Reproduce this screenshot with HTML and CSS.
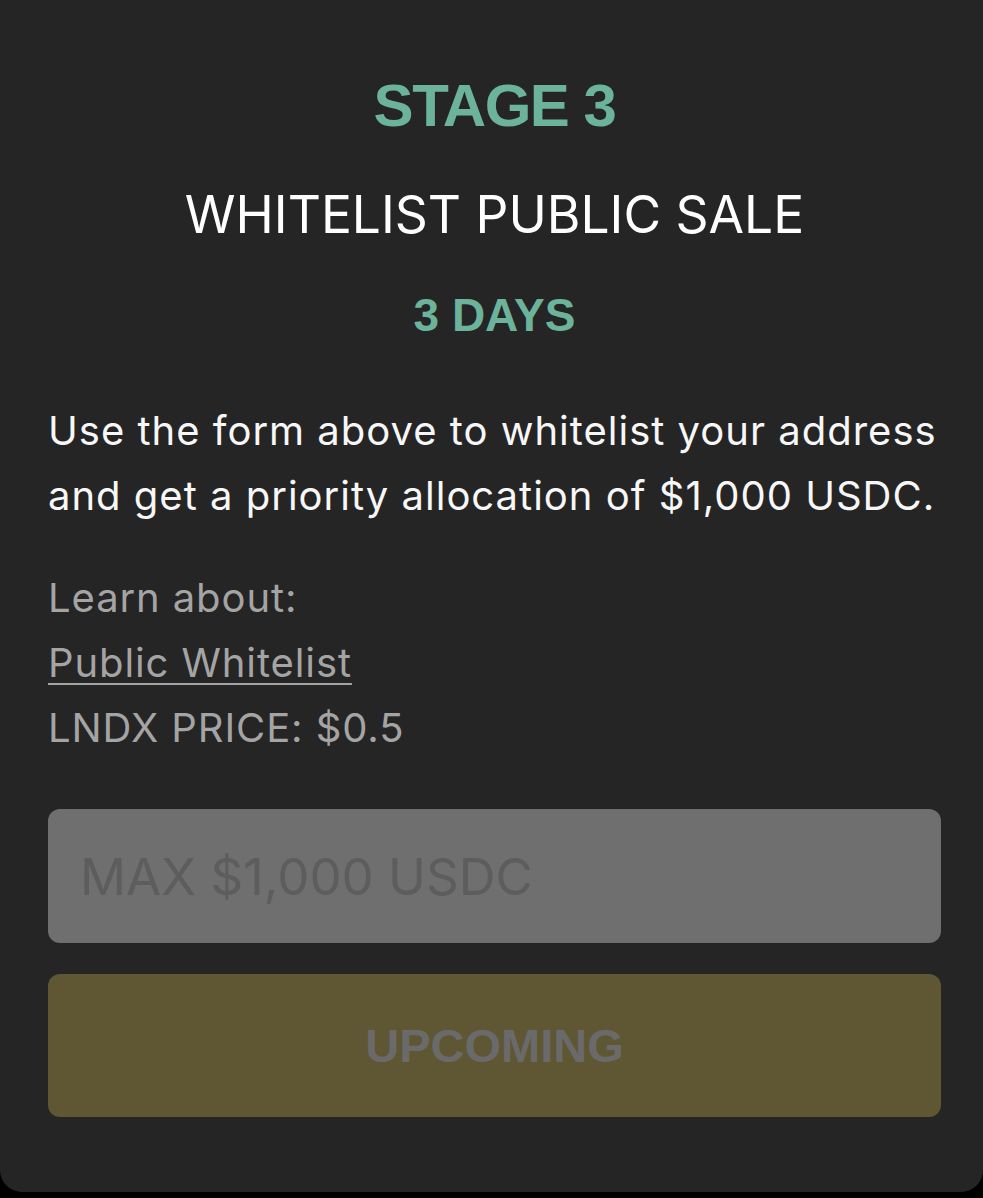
FILE: index.html
```html
<!DOCTYPE html>
<html lang="en">
<head>
    <meta charset="UTF-8">
    <meta name="viewport" content="width=device-width, initial-scale=1.0">
    <title>Stage 3 - Whitelist Public Sale</title>
    <link rel="stylesheet" href="styles.css">
</head>
<body>
    <div class="card">
        <div class="stage-title">STAGE 3</div>
        <div class="sale-name">WHITELIST PUBLIC SALE</div>
        <div class="duration">3 DAYS</div>

        <p class="description">Use the form above to whitelist your address and get a priority allocation of $1,000 USDC.</p>

        <!-- 링크 / 가격 정보 -->
        <div class="info">
            <div>Learn about:</div>
            <a class="link" href="#">Public Whitelist</a>
            <div>LNDX PRICE: $0.5</div>
        </div>

        <form class="buy-form">
            <input type="text" class="input-field" placeholder="MAX $1,000 USDC" disabled>
            <button type="button" class="button" disabled>UPCOMING</button>
        </form>
    </div>
</body>
</html>
```

FILE: styles.css
```css
body {
    margin: 0;
    background-color: #000;
    font-family: 'Inter', 'Noto Sans', sans-serif;
}
.card {
    background: #252525;
    height: 1192px;
    box-sizing: border-box;
    padding: 76px 42px 0 48px;
    border-radius: 0 0 22px 22px;
}
.stage-title {
    font-family: 'Liberation Sans', Arial, sans-serif;
    font-weight: bold;
    font-size: 60px;
    line-height: 60px;
    letter-spacing: -1.5px;
    color: #6cb39b;
    text-align: center;
}
.sale-name {
    margin-top: 52px;
    font-size: 51.5px;
    line-height: 52px;
    color: #fff;
    text-align: center;
}
.duration {
    margin-top: 52px;
    font-family: 'Liberation Sans', Arial, sans-serif;
    font-weight: bold;
    font-size: 46px;
    line-height: 46px;
    color: #6cb39b;
    text-align: center;
}
.description {
    margin: 60px 0 0;
    font-size: 40px;
    line-height: 65px;
    letter-spacing: 1px;
    color: #f7f7f7;
}
.info {
    margin-top: 37px;
    font-size: 40px;
    line-height: 65px;
    letter-spacing: 0.9px;
    color: #a4a4a4;
}
.link {
    color: #a4a4a4;
    text-decoration: underline;
    text-decoration-thickness: 2px;
    text-underline-offset: 6px;
}
.buy-form {
    margin-top: 49px;
    display: flex;
    flex-direction: column;
    gap: 31px;
}
.input-field {
    height: 134px;
    box-sizing: border-box;
    padding: 0 32px;
    border: none;
    border-radius: 12px;
    background: #6f6f6f;
    font-family: 'Inter', sans-serif;
    font-size: 51px;
    color: #5c5c5c;
}
.input-field::placeholder {
    color: #5d5d5d;
}
.button {
    height: 143px;
    border: none;
    border-radius: 12px;
    background: #5f5633;
    font-family: 'Liberation Sans', Arial, sans-serif;
    font-weight: bold;
    font-size: 47px;
    color: #6a6a6a;
}
```
